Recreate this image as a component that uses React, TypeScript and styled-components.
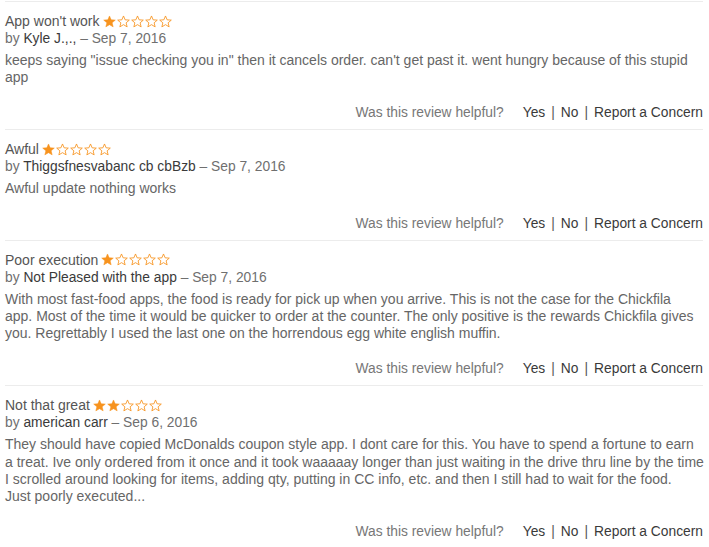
import React from 'react';
import styled, { createGlobalStyle } from 'styled-components';

const GlobalStyle = createGlobalStyle`
  html, body {
    margin: 0;
    padding: 0;
    background: #ffffff;
  }
  body {
    font-family: "Liberation Sans", Arial, sans-serif;
    -webkit-font-smoothing: antialiased;
  }
`;

const List = styled.div`
  width: 698px;
  padding: 1px 0 0 5px;
`;

const Review = styled.section`
  border-top: 1px solid #ececec;
  padding: 11px 0 8px;
`;

const TitleRow = styled.div`
  display: flex;
  align-items: center;
  gap: 3px;
  font-size: 14px;
  line-height: 17px;
  color: #555;
`;

const Stars = styled.span`
  display: inline-flex;
  gap: 1px;
  margin-top: -1px;
`;

const Byline = styled.div`
  font-size: 13.8px;
  line-height: 17px;
  color: #6f6f6f;
`;

const Author = styled.span`
  color: #3a3a3a;
`;

const Body = styled.p`
  margin: 5px 0 0;
  font-size: 14px;
  line-height: 17.3px;
  color: #666;
`;

const Line = styled.span`
  display: block;
  white-space: nowrap;
`;

const Helpful = styled.div`
  display: flex;
  justify-content: flex-end;
  align-items: center;
  margin-top: 17.5px;
  font-size: 13.8px;
  line-height: 17px;
  color: #777;
`;

const Question = styled.span`
  margin-right: 19px;
`;

const Action = styled.span`
  color: #3a3a3a;
`;

const Bar = styled.span`
  color: #555;
  margin: 0 6px;
`;

const Star = ({ filled }: { filled: boolean }) => (
  <svg width="13" height="13" viewBox="0 0 24 24">
    <path
      d="M12 1.8l3.05 7.1 7.65.55-5.85 4.95 1.85 7.5L12 17.8l-6.7 4.1 1.85-7.5L1.3 9.45l7.65-.55z"
      fill={filled ? '#f7931e' : 'none'}
      stroke="#f7931e"
      strokeWidth={filled ? 1 : 1.6}
      strokeLinejoin="round"
    />
  </svg>
);

type Item = {
  title: string;
  rating: number;
  author: string;
  date: string;
  lines: string[];
};

// lines kept as wrapped in the store listing
const reviews: Item[] = [
  {
    title: "App won't work",
    rating: 1,
    author: 'Kyle J.,.,',
    date: 'Sep 7, 2016',
    lines: [
      'keeps saying "issue checking you in" then it cancels order. can\'t get past it. went hungry because of this stupid',
      'app',
    ],
  },
  {
    title: 'Awful',
    rating: 1,
    author: 'Thiggsfnesvabanc cb cbBzb',
    date: 'Sep 7, 2016',
    lines: ['Awful update nothing works'],
  },
  {
    title: 'Poor execution',
    rating: 1,
    author: 'Not Pleased with the app',
    date: 'Sep 7, 2016',
    lines: [
      'With most fast-food apps, the food is ready for pick up when you arrive. This is not the case for the Chickfila',
      'app. Most of the time it would be quicker to order at the counter. The only positive is the rewards Chickfila gives',
      'you. Regrettably I used the last one on the horrendous egg white english muffin.',
    ],
  },
  {
    title: 'Not that great',
    rating: 2,
    author: 'american carr',
    date: 'Sep 6, 2016',
    lines: [
      'They should have copied McDonalds coupon style app. I dont care for this. You have to spend a fortune to earn',
      'a treat. Ive only ordered from it once and it took waaaaay longer than just waiting in the drive thru line by the time',
      'I scrolled around looking for items, adding qty, putting in CC info, etc. and then I still had to wait for the food.',
      'Just poorly executed...',
    ],
  },
];

const App: React.FC = () => (
  <>
    <GlobalStyle />
    <List>
      {reviews.map((r, i) => (
        <Review key={i}>
          <TitleRow>
            {r.title}
            <Stars>
              {[0, 1, 2, 3, 4].map((n) => (
                <Star key={n} filled={n < r.rating} />
              ))}
            </Stars>
          </TitleRow>
          <Byline>
            by <Author>{r.author}</Author> – {r.date}
          </Byline>
          <Body>
            {r.lines.map((l, j) => (
              <Line key={j}>{l}</Line>
            ))}
          </Body>
          <Helpful>
            <Question>Was this review helpful?</Question>
            <Action>Yes</Action>
            <Bar>|</Bar>
            <Action>No</Action>
            <Bar>|</Bar>
            <Action>Report a Concern</Action>
          </Helpful>
        </Review>
      ))}
    </List>
  </>
);

export default App;
